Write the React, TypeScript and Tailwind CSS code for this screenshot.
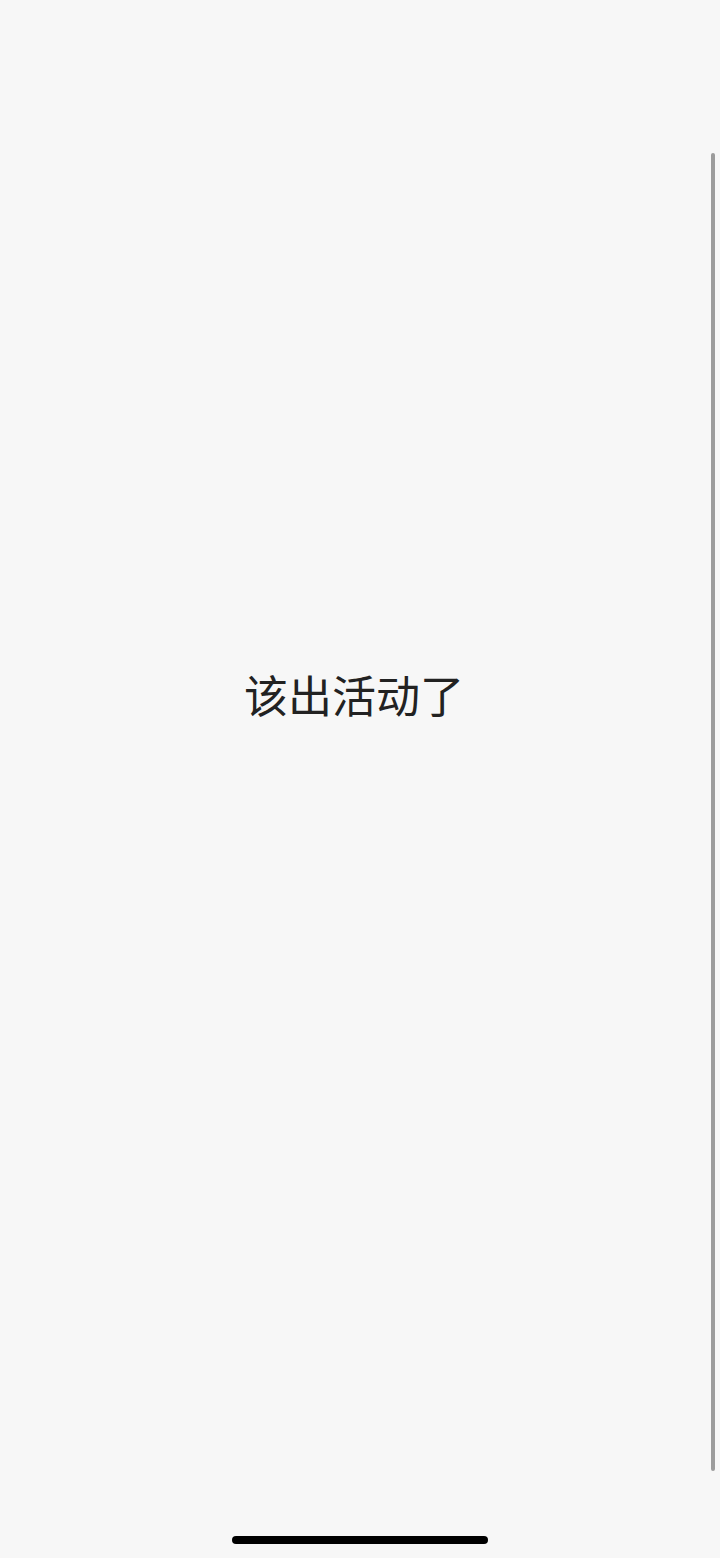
export default function App() {
  return (
    <div
      className="relative h-[1558px] w-full overflow-hidden bg-[#f7f7f7]"
      style={{ fontFamily: '"Noto Sans CJK SC", "Noto Sans", sans-serif' }}
    >
      {/* Main content */}
      <div className="flex flex-col items-center pt-[665px] pr-[12px]">
        <p className="text-[44px] leading-[58px] text-[#222222]">该出活动了</p>
      </div>

      {/* Scrollbar */}
      <div className="absolute right-[5px] top-[153px] h-[1318px] w-[4px] rounded-full bg-[#9c9c9c]" />

      {/* Home indicator */}
      <div className="absolute bottom-[14px] left-1/2 h-[8px] w-[256px] -translate-x-1/2 rounded-full bg-black" />
    </div>
  );
}
